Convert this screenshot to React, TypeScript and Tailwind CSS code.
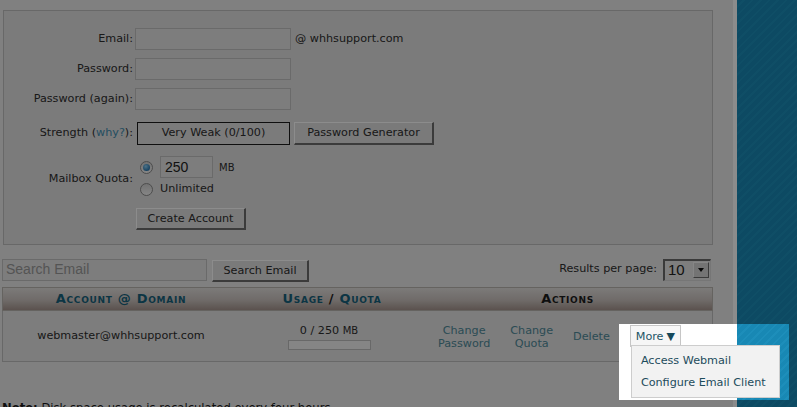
import React from "react";

const btn =
  "bg-[#dedede] border-t border-l border-r-2 border-b-2 border-t-white border-l-white border-r-[#6c6c6c] border-b-[#6c6c6c] text-[#2e2e2e] leading-none";

const field = "h-[22px] border border-[#c2c2c2] bg-[#e3e3e3]";

const Radio = ({ checked }: { checked?: boolean }) => (
  <span className="w-[13px] h-[13px] rounded-full border border-[#8c8c8c] bg-[linear-gradient(#d0d0d0,#f4f4f4)] flex items-center justify-center shrink-0">
    {checked && (
      <span className="w-[7px] h-[7px] rounded-full bg-[radial-gradient(circle_at_40%_35%,#8fd0f5,#2a78b0_70%)]" />
    )}
  </span>
);

const Label = ({ children, className = "" }: { children?: React.ReactNode; className?: string }) => (
  <span className={`w-[129px] shrink-0 text-right ${className}`}>{children}</span>
);

const App = () => {
  return (
    <div className="relative w-[797px] h-[407px] overflow-hidden flex font-['DejaVu_Sans',Verdana,sans-serif] text-[11.2px] text-[#2e2e2e]">
      <main className="w-[733px] shrink-0 bg-[#e9e9e9] pl-[2px] pt-[10px]">
        {/* add account form */}
        <div className="ml-[1px] w-[710px] border border-[#bdbdbd] bg-[#e0e0e0] pt-[17px] pb-[14px]">
          <div className="flex items-center h-[22px]">
            <Label>Email:</Label>
            <div className={`${field} ml-[2px] w-[156px]`} />
            <span className="ml-[4px]">@ whhsupport.com</span>
          </div>
          <div className="flex items-center h-[22px] mt-[8px]">
            <Label>Password:</Label>
            <div className={`${field} ml-[2px] w-[156px]`} />
          </div>
          <div className="flex items-center h-[22px] mt-[8px]">
            <Label>Password (again):</Label>
            <div className={`${field} ml-[2px] w-[156px]`} />
          </div>
          <div className="flex items-center h-[23px] mt-[12px]">
            <Label>
              Strength (<span className="text-[#3f8db0]">why?</span>):
            </Label>
            <div className="ml-[4px] w-[153px] h-[23px] border border-[#1c1c1c] flex items-center justify-center">
              Very Weak (0/100)
            </div>
            <button className={`${btn} ml-[4px] w-[140px] h-[23px]`}>Password Generator</button>
          </div>
          <div className="flex items-center mt-[11px]">
            <Label className="pt-[5px]">Mailbox Quota:</Label>
            <div className="ml-[2px] flex flex-col">
              <div className="flex items-center h-[22px]">
                <span className="ml-[5px]">
                  <Radio checked />
                </span>
                <div className={`${field} ml-[7px] w-[53px] flex items-center pl-[4px] text-[14px] font-['Liberation_Sans',sans-serif] text-[#222]`}>
                  250
                </div>
                <span className="ml-[6px] text-[10px]">MB</span>
              </div>
              <div className="flex items-center h-[16px] mt-[3px]">
                <span className="ml-[5px]">
                  <Radio />
                </span>
                <span className="ml-[7px]">Unlimited</span>
              </div>
            </div>
          </div>
          <div className="flex mt-[11px]">
            <Label />
            <button className={`${btn} ml-[3px] w-[110px] h-[22px]`}>Create Account</button>
          </div>
        </div>

        {/* search row */}
        <div className="w-[711px] flex items-center mt-[13px] h-[23px]">
          <div className={`${field} w-[205px] flex items-center pl-[3px] text-[14px] font-['Liberation_Sans',sans-serif] text-[#9a9a9a]`}>
            Search Email
          </div>
          <button className={`${btn} ml-[5px] mt-[3px] w-[97px] h-[22px]`}>Search Email</button>
          <span className="ml-auto">Results per page:</span>
          <div className="ml-[6px] mr-[2px] w-[48px] h-[22px] border-t-2 border-l-2 border-r border-b border-t-[#6a6a6a] border-l-[#6a6a6a] border-r-[#d8d8d8] border-b-[#d8d8d8] bg-[#e6e6e6] flex items-center justify-between pl-[3px] pr-[1px]">
            <span className="text-[15px] font-['Liberation_Sans',sans-serif] text-[#222]">10</span>
            <span className="w-[16px] h-[16px] bg-[#d4d4d4] border border-[#f4f4f4] border-r-[#6c6c6c] border-b-[#6c6c6c] flex items-center justify-center">
              <span className="w-0 h-0 border-l-[3px] border-r-[3px] border-t-[4px] border-l-transparent border-r-transparent border-t-[#111]" />
            </span>
          </div>
        </div>

        {/* accounts table */}
        <div className="w-[711px] mt-[6px]">
          <div className="grid grid-cols-[236px_180px_1fr] items-center h-[24px] border border-[#b9b4b0] bg-[linear-gradient(#e2dfdd,#cbc3bf_55%,#a6968f)] font-bold text-[13px] tracking-[0.7px] [font-variant:small-caps] text-[#16627c]">
            <span className="text-center">Account @ Domain</span>
            <span className="text-center pl-[6px]">
              Usage <span className="text-[#1d1d1d]">/</span> Quota
            </span>
            <span className="text-center text-[#1d1d1d] pl-[4px]">Actions</span>
          </div>
          <div className="grid grid-cols-[236px_180px_1fr] items-center h-[51px] border-l border-r border-b border-[#bdbdbd] bg-[#e3e3e3]">
            <span className="text-center">webmaster@whhsupport.com</span>
            <div className="flex flex-col items-center">
              <span className="leading-[16px]">
                0 / 250 <span className="text-[10px]">MB</span>
              </span>
              <div className="mt-[1px] w-[83px] h-[10px] border border-[#bdbdbd] bg-[#f2f2f2]" />
            </div>
            <div className="flex items-center pl-[19px] gap-[20px] text-[#4f8a9a] leading-[13px] text-center">
              <span className="pt-[1px]">
                Change
                <br />
                Password
              </span>
              <span className="pt-[1px]">
                Change
                <br />
                Quota
              </span>
              <span>Delete</span>
              <div className="relative z-20">
                <button className="w-[51px] h-[22px] border border-[#c6c6c6] bg-[#f6f6f6] text-[#1d5566] flex items-center justify-center gap-[3px]">
                  More <span className="text-[11px] text-[#15495a]">▼</span>
                </button>
                <div className="absolute left-[1px] top-[20px] w-[149px] h-[53px] border border-[#cdcdcd] bg-[#f2f2f2] text-[#1d4c5c] text-left pl-[9px] pt-[8px] flex flex-col gap-[9px] leading-[13px]">
                  <span className="whitespace-nowrap">Access Webmail</span>
                  <span className="whitespace-nowrap">Configure Email Client</span>
                </div>
              </div>
            </div>
          </div>
        </div>

        <p className="mt-[38px] text-[11.6px] text-[#1d1d1d]">
          <b>Note:</b> Disk space usage is recalculated every four hours.
        </p>
      </main>
      <div className="w-[4px] shrink-0 bg-white" />
      <aside className="flex-1 bg-[repeating-linear-gradient(135deg,#1888b4_0px,#1888b4_4px,#1d8eba_4px,#1d8eba_6px)]" />

      {/* tutorial spotlight around the "More" menu */}
      <div className="absolute left-[619px] top-[324px] w-[170px] h-[76px] z-10 flex shadow-[0_0_0_1200px_rgba(0,0,0,0.45)]">
        <div className="w-[118px] bg-white" />
      </div>
    </div>
  );
};

export default App;
